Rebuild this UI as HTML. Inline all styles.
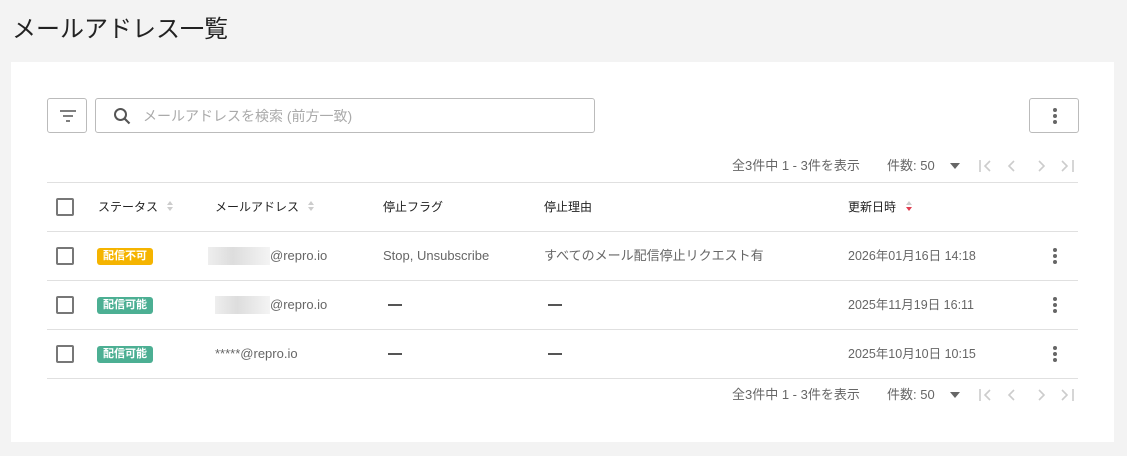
<!DOCTYPE html>
<html><head><meta charset="utf-8"><style>
*{margin:0;padding:0;box-sizing:border-box}
body{width:1127px;height:456px;background:#f3f3f3;font-family:"Liberation Sans","Noto Sans CJK JP",sans-serif;position:relative;overflow:hidden;color:#333}
.a{position:absolute}
h1{position:absolute;left:12px;top:9px;font-size:24px;font-weight:400;color:#222}
.card{position:absolute;left:11px;top:62px;width:1103px;height:380px;background:#fff}
.btn{position:absolute;border:1px solid #bbb;border-radius:3px;background:#fff}
.line{position:absolute;left:47px;width:1031px;height:1px;background:#e0e0e0}
.t{position:absolute;font-size:13px;line-height:16px;white-space:nowrap}
.h{color:#222;font-size:12px}
.g{color:#666}
.cb{position:absolute;left:56px;width:18px;height:18px;border:2px solid #777;border-radius:2px}
.tag{position:absolute;left:97px;height:17px;padding:0 6px;border-radius:3px;color:#fff;font-size:11px;line-height:17px;font-weight:bold}
.dots{position:absolute;left:1053px;width:4px}
.dots i{display:block;width:4px;height:4px;border-radius:2px;background:#666;margin-bottom:2px}
.dash{position:absolute;width:14px;height:2px;background:#555}
.sort{position:absolute;width:8px}
.pg{color:#666;font-size:13px}
.blur{position:absolute;background:linear-gradient(90deg,#eee,#ddd 40%,#f4f4f4);height:18px}
</style></head><body>
<h1>メールアドレス一覧</h1>
<div class="card"></div>
<div class="btn" style="left:47px;top:98px;width:40px;height:35px">
<svg class="a" style="left:11px;top:10px" width="18" height="14"><path d="M1 2h16M4 7h10M7 12h4" stroke="#555" stroke-width="1.6"/></svg></div>
<div class="btn" style="left:95px;top:98px;width:500px;height:35px">
<svg class="a" style="left:17px;top:8px" width="20" height="20"><circle cx="7.5" cy="7.5" r="5.5" fill="none" stroke="#555" stroke-width="2"/><path d="M11.5 11.5l5 5" stroke="#555" stroke-width="2.2"/></svg>
<span class="t" style="left:47px;top:9px;color:#aaa;font-size:14px">メールアドレスを検索 (前方一致)</span></div>
<div class="btn" style="left:1029px;top:98px;width:50px;height:35px"><div class="dots" style="left:23px;top:9px"><i></i><i></i><i></i></div></div>

<span class="t pg" style="left:732px;top:158px">全3件中 1 - 3件を表示</span>
<span class="t pg" style="left:887px;top:158px">件数: 50</span>
<svg class="a" style="left:950px;top:163px" width="10" height="6"><path d="M0 0h10L5 6z" fill="#666"/></svg>
<svg class="a" style="left:975px;top:158px" width="105" height="16"><g fill="none" stroke="#ccc" stroke-width="1.6"><path d="M5 2v12M15 3l-5 5 5 5M39 3l-5 5 5 5M64 3l5 5-5 5M87 3l5 5-5 5M98 2v12"/></g></svg>

<div class="line" style="top:182px"></div>
<div class="cb" style="top:198px"></div>
<span class="t h" style="left:98px;top:199px">ステータス</span>
<svg class="sort" style="left:166px;top:199px" height="14"><path d="M1 6l3-4 3 4zM1 8l3 4 3-4z" fill="#ccc"/></svg>
<span class="t h" style="left:215px;top:199px">メールアドレス</span>
<svg class="sort" style="left:307px;top:199px" height="14"><path d="M1 6l3-4 3 4zM1 8l3 4 3-4z" fill="#ccc"/></svg>
<span class="t h" style="left:383px;top:199px">停止フラグ</span>
<span class="t h" style="left:544px;top:199px">停止理由</span>
<span class="t h" style="left:848px;top:199px">更新日時</span>
<svg class="sort" style="left:905px;top:199px" height="14"><path d="M1 6l3-4 3 4z" fill="#ccc"/><path d="M1 8l3 4 3-4z" fill="#e03c4f"/></svg>
<div class="line" style="top:231px"></div>

<div class="cb" style="top:247px"></div>
<div class="tag" style="top:248px;background:#f5b400">配信不可</div>
<div class="blur" style="left:208px;top:247px;width:62px"></div>
<span class="t g" style="left:270px;top:248px">@repro.io</span>
<span class="t g" style="left:383px;top:248px">Stop, Unsubscribe</span>
<span class="t g" style="left:544px;top:248px">すべてのメール配信停止リクエスト有</span>
<span class="t g" style="left:848px;top:248px;font-size:12.5px">2026年01月16日 14:18</span>
<div class="dots" style="top:248px"><i></i><i></i><i></i></div>
<div class="line" style="top:280px"></div>

<div class="cb" style="top:296px"></div>
<div class="tag" style="top:297px;background:#4caf93">配信可能</div>
<div class="blur" style="left:215px;top:296px;width:55px"></div>
<span class="t g" style="left:270px;top:297px">@repro.io</span>
<div class="dash" style="left:388px;top:304px"></div>
<div class="dash" style="left:548px;top:304px"></div>
<span class="t g" style="left:848px;top:297px;font-size:12.5px">2025年11月19日 16:11</span>
<div class="dots" style="top:297px"><i></i><i></i><i></i></div>
<div class="line" style="top:329px"></div>

<div class="cb" style="top:345px"></div>
<div class="tag" style="top:346px;background:#4caf93">配信可能</div>
<span class="t g" style="left:215px;top:346px">*****@repro.io</span>
<div class="dash" style="left:388px;top:353px"></div>
<div class="dash" style="left:548px;top:353px"></div>
<span class="t g" style="left:848px;top:346px;font-size:12.5px">2025年10月10日 10:15</span>
<div class="dots" style="top:346px"><i></i><i></i><i></i></div>
<div class="line" style="top:378px"></div>

<span class="t pg" style="left:732px;top:387px">全3件中 1 - 3件を表示</span>
<span class="t pg" style="left:887px;top:387px">件数: 50</span>
<svg class="a" style="left:950px;top:392px" width="10" height="6"><path d="M0 0h10L5 6z" fill="#666"/></svg>
<svg class="a" style="left:975px;top:387px" width="105" height="16"><g fill="none" stroke="#ccc" stroke-width="1.6"><path d="M5 2v12M15 3l-5 5 5 5M39 3l-5 5 5 5M64 3l5 5-5 5M87 3l5 5-5 5M98 2v12"/></g></svg>
</body></html>
